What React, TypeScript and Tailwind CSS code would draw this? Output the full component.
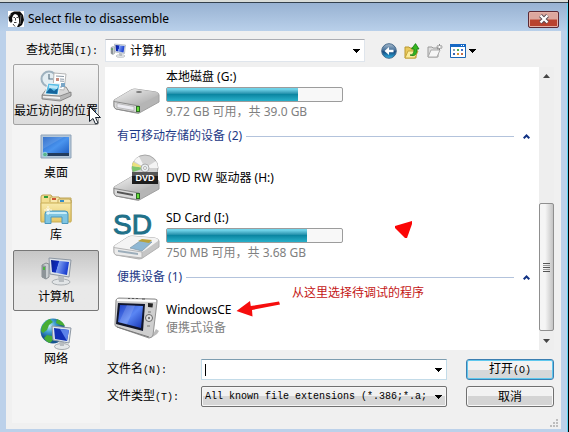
import React, { useState } from "react";

type Drive = {
  name: string;
  detail?: string;
  used?: number;
  icon: React.ReactNode;
};

type Place = {
  key: string;
  label: string;
  icon: React.ReactNode;
};

const PLACES: Place[] = [
  { key: "recent", label: "最近访问的位置", icon: <RecentIcon /> },
  { key: "desktop", label: "桌面", icon: <DesktopIcon /> },
  { key: "library", label: "库", icon: <LibraryIcon /> },
  { key: "computer", label: "计算机", icon: <ComputerIcon className="h-8 w-8" /> },
  { key: "network", label: "网络", icon: <NetworkIcon /> },
];

const HARD_DISKS: Drive[] = [
  {
    name: "本地磁盘 (G:)",
    detail: "9.72 GB 可用，共 39.0 GB",
    used: 75,
    icon: <HardDiskIcon />,
  },
];

const REMOVABLE: Drive[] = [
  { name: "DVD RW 驱动器 (H:)", icon: <DvdIcon /> },
  {
    name: "SD Card (I:)",
    detail: "750 MB 可用，共 3.68 GB",
    used: 80,
    icon: <SdIcon />,
  },
];

const PORTABLE: Drive[] = [
  { name: "WindowsCE", detail: "便携式设备", icon: <PdaIcon /> },
];

export default function App() {
  const [place, setPlace] = useState("computer");
  const [fileName, setFileName] = useState("");

  return (
    <div className="relative flex min-h-screen flex-col overflow-hidden border-r border-black bg-[#bcd1ea] font-['Noto_Sans','Noto_Sans_CJK_SC',sans-serif] text-[12px] leading-4 text-black">
      <div className="h-[3px] border-b border-[#33404c] bg-[#d9dcd8]" />
      <div className="flex flex-1 flex-col border-r border-[#5cd6f5] pr-[6px] pb-[3px] pl-[6px]">
        <TitleBar />

        <main className="relative flex flex-1 flex-col bg-[#f0f0f0]">
          <div className="flex items-center pt-2 pb-0.5">
            <label htmlFor="look-in" className="w-[99px] shrink-0 pl-5">
              查找范围<Mono>(I):</Mono>
            </label>
            <div className="flex h-[23px] flex-1 items-center border border-[#dfe5ec] border-t-[#abadb3] bg-white pr-1 pl-1">
              <ComputerIcon className="h-4 w-4" />
              <select
                id="look-in"
                className="min-w-0 flex-1 appearance-none bg-transparent pl-1 outline-none"
              >
                <option>计算机</option>
              </select>
              <DownArrow />
            </div>
            <Toolbar />
          </div>

          <div className="flex flex-1">
            <nav className="mb-[6px] ml-[6px] flex w-[88px] shrink-0 flex-col items-center gap-px self-stretch bg-[#f4f4f4]">
              {PLACES.map((p) => (
                <PlaceButton
                  key={p.key}
                  place={p}
                  hot={p.key === "recent"}
                  active={p.key === place}
                  onClick={() => setPlace(p.key)}
                />
              ))}
            </nav>

            <div className="mr-[7px] ml-[5px] flex min-w-0 flex-1 flex-col pt-[3px]">
              <div className="flex bg-white">
                <div className="min-w-0 flex-1 pt-0.5 pb-[6px]">
                  <DriveList drives={HARD_DISKS} />
                  <GroupHeader title="有可移动存储的设备 (2)" />
                  <DriveList drives={REMOVABLE} />
                  <GroupHeader title="便携设备 (1)" />
                  <DriveList drives={PORTABLE} />
                </div>
                <ScrollBar />
              </div>

              <form
                onSubmit={(e) => e.preventDefault()}
                className="mt-[9px] grid grid-cols-[94px_1fr_88px] items-center gap-y-[6px] pl-0.5"
              >
                <label htmlFor="file-name">
                  文件名<Mono>(N):</Mono>
                </label>
                <div className="mr-[19px] flex h-[21px] items-center border border-[#c3dbe8] border-t-[#7d9db0] bg-white pr-1 pl-[3px]">
                  <span className="h-3 w-px bg-black" />
                  <input
                    id="file-name"
                    value={fileName}
                    onChange={(e) => setFileName(e.target.value)}
                    className="min-w-0 flex-1 bg-transparent outline-none"
                  />
                  <DownArrow />
                </div>
                <button
                  type="submit"
                  className="h-[21px] rounded-[3px] border border-[#3c7fb1] bg-linear-to-b from-[#f2f2f2] from-50% to-[#d6d8da] to-50% leading-[17px] shadow-[inset_0_0_0_1px_#5fc8ee]"
                >
                  打开<Mono>(O)</Mono>
                </button>

                <label htmlFor="file-type">
                  文件类型<Mono>(T):</Mono>
                </label>
                <div className="mr-[19px] flex h-[21px] items-center rounded-[2px] border border-[#707070] bg-linear-to-b from-[#f1f1f1] from-50% to-[#d6d6d6] to-50% pr-1 pl-[3px] shadow-[inset_0_0_0_1px_#f6f6f6]">
                  <select
                    id="file-type"
                    className="min-w-0 flex-1 appearance-none bg-transparent font-['Liberation_Mono',monospace] text-[10px] outline-none"
                  >
                    <option>All known file extensions (*.386;*.a;</option>
                  </select>
                  <DownArrow />
                </div>
                <button
                  type="button"
                  className="h-[21px] rounded-[3px] border border-[#707070] bg-linear-to-b from-[#f2f2f2] from-50% to-[#d4d4d4] to-50% leading-[17px] shadow-[inset_0_0_0_1px_#f8f8f8]"
                >
                  取消
                </button>
              </form>
            </div>
          </div>
          <ResizeGrip />
        </main>
      </div>

      {/* Notes drawn over the dialog */}
      <svg
        className="pointer-events-none absolute top-[298px] left-[236px] h-6 w-12"
        viewBox="0 0 48 24"
        fill="#f60d0d"
      >
        <path d="M.5 13 14 3l.8 5L43 3.500l1 3L16 12l.5 6.500Z" />
      </svg>
      <svg
        className="pointer-events-none absolute top-[220px] left-[394px] h-5 w-5"
        viewBox="0 0 20 20"
        fill="#fb0505"
      >
        <path d="M1 6 18 1v3l-5 14h-2L1 8Z" />
      </svg>
      <span className="pointer-events-none absolute top-[285px] left-[292px] whitespace-nowrap text-[#c41616]">
        从这里选择待调试的程序
      </span>
      <svg
        className="pointer-events-none absolute top-[106px] left-[89px] h-[19px] w-3"
        viewBox="0 0 12 19"
      >
        <path
          d="M.5.500v15l3.500-3 2.500 5.500 2.500-1-2.500-5.500h5Z"
          fill="#fff"
          stroke="#16202c"
        />
      </svg>
    </div>
  );
}

function Mono({ children }: { children: React.ReactNode }) {
  return (
    <span className="font-['Liberation_Mono',monospace] text-[10px]">
      {children}
    </span>
  );
}

function TitleBar() {
  return (
    <header className="-mx-[6px] flex h-7 items-center bg-linear-to-b from-[#98b2d2] to-[#b9d0ea] pt-1 pr-2 pl-2">
      <svg className="h-4 w-4" viewBox="0 0 16 16">
        <path fill="#fff" d="M0 0h16v16H0z" />
        <path
          fill="#0c0c0c"
          d="M3 2 6 .5h6L15 4l1 5-2 5-3 2H9l2-4V8L9.500 4 7 3 5.500 4 4 7l.5 3L3 12 1 10l-.5-4Z"
        />
        <path
          d="M5.500 6.500H7M8.500 6.500h1.500M7.500 7v2.500M6 11.500h2.500M5 13l2 2.500"
          stroke="#444"
          fill="none"
        />
        <path
          d="m1 6 2-3M1.500 10l1.500 2M13 4l-1 9"
          stroke="#999"
          strokeWidth=".7"
        />
      </svg>
      <h1 className="flex-1 pl-1 text-[12px] leading-4">
        Select file to disassemble
      </h1>
      <button
        aria-label="Close"
        className="flex h-[17px] w-[31px] items-center justify-center rounded-[2px] border border-[#5c2a35] bg-linear-to-b from-[#dca79e] from-45% to-[#b9432f] to-55% shadow-[inset_0_0_0_1px_#e3b0a6]"
      >
        <svg className="h-[10px] w-3" viewBox="0 0 12 10">
          <path d="m2.500 1.500 7 7m0-7-7 7" stroke="#5a4a52" strokeWidth="4" />
          <path d="m2.500 1.500 7 7m0-7-7 7" stroke="#fff" strokeWidth="2.300" />
        </svg>
      </button>
    </header>
  );
}

function Toolbar() {
  return (
    <div className="flex w-[196px] shrink-0 items-center gap-[7px] pl-4">
      <button aria-label="Back">
        <svg className="h-4 w-4" viewBox="0 0 16 16">
          <defs>
            <linearGradient id="back" x2="0" y2="1">
              <stop stopColor="#a9bccd" />
              <stop offset=".45" stopColor="#44709a" />
              <stop offset=".55" stopColor="#164a80" />
              <stop offset="1" stopColor="#2fb5e6" />
            </linearGradient>
          </defs>
          <circle cx="8" cy="8" r="7.300" fill="url(#back)" stroke="#466a8c" />
          <path d="M3.500 8 8 4v2.700h4.500v2.600H8V12Z" fill="#fff" />
        </svg>
      </button>
      <button aria-label="Up one level">
        <svg className="h-4 w-4" viewBox="0 0 16 16">
          <path d="M1 4h4l1 1h6v10H1Z" fill="#e9c95c" stroke="#b99830" />
          <path d="m1 15 3-7h10l-3 7Z" fill="#fbec9c" stroke="#c7a63c" />
          <path
            d="M6 12c3 0 4-2 4-6H7.500L11.500.600 15 6h-2c0 5-2 8-7 6Z"
            fill="#35b51f"
            stroke="#137a12"
            strokeWidth=".8"
          />
        </svg>
      </button>
      <button aria-label="New folder">
        <svg className="h-4 w-4" viewBox="0 0 16 16">
          <path d="M1 4h4l1 1h5v9H1Z" fill="#dedede" stroke="#9a9a9a" />
          <path d="m1 14 3-7h9l-3 7Z" fill="#f6f6f6" stroke="#aaa" />
          <path
            d="M12.500 1v6M9.500 4h6M10.500 2l4 4m0-4-4 4"
            stroke="#777"
            strokeWidth=".9"
          />
          <circle cx="12.500" cy="4" r="1.200" fill="#fff" />
        </svg>
      </button>
      <button aria-label="View menu" className="flex items-center gap-[3px]">
        <svg className="h-4 w-4" viewBox="0 0 16 16">
          <path d="M.5 1.500h15v13H.5Z" fill="#fff" stroke="#1a66b5" />
          <path d="M0 1h16v3H0Z" fill="#1668c4" />
          <path d="M11 2h1v1h-1zM13 2h1v1h-1z" fill="#fff" />
          <path d="M3 6h2v2H3z" fill="#8aa1b4" />
          <path d="M7 6h2v2H7z" fill="#4caf50" />
          <path d="M11 6h2v2h-2z" fill="#3f72c7" />
          <path d="M3 10h2v2H3z" fill="#3a66b0" />
          <path d="M7 10h2v2H7z" fill="#d9902f" />
          <path d="M11 10h2v2h-2z" fill="#c26d4b" />
        </svg>
        <DownArrow />
      </button>
    </div>
  );
}

function DownArrow() {
  return (
    <svg
      className="pointer-events-none h-1 w-[7px] shrink-0"
      viewBox="0 0 7 4"
      shapeRendering="crispEdges"
    >
      <path d="M0 0h7L3.500 4Z" />
    </svg>
  );
}

function PlaceButton({
  place,
  hot,
  active,
  onClick,
}: {
  place: Place;
  hot: boolean;
  active: boolean;
  onClick: () => void;
}) {
  return (
    <button
      onClick={onClick}
      className={`flex h-[61px] w-[86px] flex-col items-center gap-px rounded-[2px] border pt-[5px] whitespace-nowrap
        ${
          active
            ? "border-[#777] bg-linear-to-b from-[#c6c6c6] to-[#e9e9e9] to-60%"
            : hot
              ? "border-[#a3a3a3] bg-linear-to-b from-[#f4f4f4] to-[#dcdcdc]"
              : "border-transparent"
        }
      `}
    >
      {place.icon}
      <span>{place.label}</span>
    </button>
  );
}

function GroupHeader({ title }: { title: string }) {
  return (
    <div className="my-1 flex h-6 items-center pl-3 text-[#1e3a87]">
      <h2 className="pr-1">{title}</h2>
      <div className="h-px flex-1 bg-[#b3c3dc]" />
      <button aria-label="Collapse" className="mx-[9px]">
        <svg className="h-[5px] w-[7px]" viewBox="0 0 7 5">
          <path
            d="M.7 4.300 3.500 1.500l2.800 2.800"
            fill="none"
            stroke="#123384"
            strokeWidth="2"
          />
        </svg>
      </button>
    </div>
  );
}

function DriveList({ drives }: { drives: Drive[] }) {
  return (
    <ul className="flex flex-col gap-[7px] pl-2">
      {drives.map((d) => (
        <li key={d.name} className="flex h-[51px] items-center gap-[5px]">
          {d.icon}
          <div className="flex flex-col gap-[2px]">
            <span>{d.name}</span>
            {typeof d.used === "number" && (
              <div className="h-[15px] w-[177px] rounded-[2px] border border-[#9c9c9c] bg-[#f8f8f8]">
                <div
                  className="h-full bg-linear-to-b from-[#6fd2e8] from-10% via-[#0b86a2] via-50% to-[#27b0ca]"
                  style={{ width: `${d.used}%` }}
                />
              </div>
            )}
            {d.detail && <span className="text-[#808080]">{d.detail}</span>}
          </div>
        </li>
      ))}
    </ul>
  );
}

function ScrollBar() {
  return (
    <div className="flex w-[15px] shrink-0 flex-col bg-[#eeeeee]">
      <button
        aria-label="Scroll up"
        className="flex h-[17px] items-center justify-center"
      >
        <svg className="h-1 w-[7px]" viewBox="0 0 7 4">
          <path d="M0 4h7L3.500 0Z" fill="#444" />
        </svg>
      </button>
      <div className="flex flex-1 flex-col justify-end">
        <div className="flex h-[128px] flex-col items-center justify-center gap-px rounded-[2px] border border-[#8f8f8f] bg-linear-to-r from-[#f5f5f5] from-40% to-[#c4c4c4]">
          <span className="h-px w-[7px] bg-[#555]" />
          <span className="h-px w-[7px] bg-[#999]" />
          <span className="h-px w-[7px] bg-[#555]" />
          <span className="h-px w-[7px] bg-[#999]" />
          <span className="h-px w-[7px] bg-[#555]" />
        </div>
      </div>
      <button
        aria-label="Scroll down"
        className="flex h-[19px] items-center justify-center"
      >
        <svg className="h-1 w-[7px]" viewBox="0 0 7 4">
          <path d="M0 0h7L3.500 4Z" fill="#444" />
        </svg>
      </button>
    </div>
  );
}

function ResizeGrip() {
  return (
    <svg
      className="absolute right-[3px] bottom-[2px] h-2 w-2"
      viewBox="0 0 8 8"
      fill="#bdbdbd"
    >
      <path d="M6 0h2v2H6zM3 3h2v2H3zM6 3h2v2H6zM0 6h2v2H0zM3 6h2v2H3zM6 6h2v2H6z" />
    </svg>
  );
}

function RecentIcon() {
  return (
    <svg className="h-8 w-8" viewBox="0 0 32 32">
      <path d="m2 25 6-8h18l5 8-10 5Z" fill="#d8d8d8" stroke="#8d8d8d" />
      <circle cx="9" cy="9" r="7.500" fill="#e3edf2" stroke="#9fb2bf" strokeWidth="2" />
      <path d="M9 4v5h4" fill="none" stroke="#5c7585" strokeWidth="1.200" />
      <path d="m14 3 12 1-2 16-11-1Z" fill="#fff" stroke="#b5b5b5" />
      <path d="m16 6 8 .5M20 9l4 .3M20 11l4 .3M16 17h6" stroke="#8b98a5" />
      <path d="M16 8h3v3h-3z" fill="#c78a7c" />
      <path d="M21 13h4v4h-4z" fill="#79a6c7" />
      <path d="m8 13 12 1-2 11-13-1Z" fill="#59bde6" stroke="#f5f5f5" />
      <path d="m6 23 4-5 4 3 4-3-1 6Z" fill="#16649b" />
      <path d="m9 15 9 1-1 3-8-1Z" fill="#bfe8f7" />
      <path d="m2 25 18 1 11-4v4l-11 5-18-2Z" fill="#b8b8b8" stroke="#7a7a7a" strokeWidth=".8" />
      <path d="m3 26 17 1v2L3 27.500Z" fill="#f3f3f3" />
    </svg>
  );
}

function DesktopIcon() {
  return (
    <svg className="h-8 w-8" viewBox="0 0 32 32">
      <defs>
        <linearGradient id="desk" x2="1" y2="1">
          <stop stopColor="#1d5fc4" />
          <stop offset=".5" stopColor="#4a94ee" />
          <stop offset="1" stopColor="#1a57bd" />
        </linearGradient>
      </defs>
      <path d="M1 3h30v23H1Z" fill="#b4c7d9" stroke="#8fa3b8" />
      <path d="M3 5h26v19H3Z" fill="url(#desk)" />
      <path d="M3 5h21L3 17Z" fill="#fff" opacity=".13" />
      <path d="M3 21h26v3H3Z" fill="#223c5e" />
      <circle cx="5" cy="22.500" r="2.300" fill="#58b58d" stroke="#a8dcec" strokeWidth=".8" />
    </svg>
  );
}

function LibraryIcon() {
  return (
    <svg className="h-8 w-8" viewBox="0 0 32 32">
      <defs>
        <linearGradient id="lib" x2="0" y2="1">
          <stop stopColor="#f8eaac" />
          <stop offset="1" stopColor="#e6c765" />
        </linearGradient>
      </defs>
      <path d="M1 27V3q0-2 2-2h8l2 3h18v23Z" fill="#f2dd91" stroke="#bea457" />
      <path d="M10 8V4q0-1 1-1h8l2 3h10v3" fill="#f7e8ad" stroke="#bea457" />
      <path d="M18 9V6q0-1 1-1h10q2 0 2 2v2" fill="#f7e8ad" stroke="#bea457" />
      <path d="M4 2h4v2H4z" fill="#2f9d36" />
      <path d="M12 4h4v2h-4z" fill="#cf5535" />
      <path d="M20 6h4v2h-4z" fill="#358dc7" />
      <path d="M1 9h30v19H1Z" fill="url(#lib)" stroke="#c9ad55" />
      <path d="M5 29.500V20q0-3 3-3h17q3 0 3 3v9.500h-6V23H11v6.500Z" fill="#7fc5e2" stroke="#4b97bd" />
      <path d="M6 20q0-2 2-2h17q2 0 2 2Z" fill="#c8edf8" />
      <path d="M8 12v9M4 16h8" stroke="#fff" strokeWidth=".8" />
      <path d="m6 14 4 4m0-4-4 4" stroke="#fff" strokeWidth=".5" />
    </svg>
  );
}

function ComputerIcon({ className }: { className: string }) {
  return (
    <svg className={className} viewBox="0 0 32 32">
      <defs>
        <linearGradient id="screen" x2="1" y2=".25">
          <stop stopColor="#0a1f8f" />
          <stop offset=".42" stopColor="#0f2cc0" />
          <stop offset=".46" stopColor="#7d9df0" />
          <stop offset="1" stopColor="#1b3fd0" />
        </linearGradient>
      </defs>
      <path d="m2 9 4-2 3 1v13l-3 2-4-2Z" fill="#c9ced1" stroke="#888e92" />
      <path d="m2 9 4 1v13l-4-2Z" fill="#8d9498" />
      <path d="M3 11h2v3H3z" fill="#49b83e" />
      <ellipse cx="21" cy="26" rx="9" ry="3" fill="#e2e5e7" stroke="#a8adb1" />
      <path d="m18 20 6 1v5h-5Z" fill="#b7bcc0" />
      <path d="m9 2 22 2-2 17-19-3Z" fill="#dde3e9" stroke="#8d97a3" />
      <path d="m11 4 18 2-2 13-15-3Z" fill="url(#screen)" />
    </svg>
  );
}

function NetworkIcon() {
  return (
    <svg className="h-8 w-8" viewBox="0 0 32 32">
      <defs>
        <radialGradient id="globe" cx=".35" cy=".3">
          <stop stopColor="#c8ecf8" />
          <stop offset=".5" stopColor="#3e9ed0" />
          <stop offset="1" stopColor="#15538f" />
        </radialGradient>
      </defs>
      <circle cx="13" cy="13" r="12.500" fill="url(#globe)" />
      <path
        d="M2 8q4-6 8-7l3 3-4 3-2 5-4 3-2-2ZM17 1q6 2 8 7l-5-1-4-2ZM7 17l5 1 1 4-3 3q-4-1-6-5Z"
        fill="#47ad35"
      />
      <ellipse cx="22" cy="28.500" rx="7.500" ry="3" fill="#e4e7e9" stroke="#a3a8ac" />
      <path d="m19 23 5 1v4h-4Z" fill="#b7bcc0" />
      <path d="m12 8 19 2-2 15-16-3Z" fill="#dde5ee" stroke="#8d97a3" />
      <path d="m14 10 15 2-2 11-12-2Z" fill="#1230b5" />
      <path d="m20 11 9 1-2 11Z" fill="#5b82ea" />
    </svg>
  );
}

function DiskBody() {
  return (
    <>
      <defs>
        <linearGradient id="body" x2="1" y2="1">
          <stop stopColor="#f3f3f3" />
          <stop offset="1" stopColor="#a5a5a5" />
        </linearGradient>
      </defs>
      <path d="m1 33 17-10q2-1 4-1l21 3q3 1 3 3v7L28 45q-2 2-5 1L3 42q-2-1-2-3Z" fill="#b5b5b5" stroke="#a0a0a0" />
      <path d="m1 33 17-10q2-1 4-1l21 3q3 1 2 3L28 37q-2 1-5 1L3 35q-2-1-2-2Z" fill="url(#body)" />
      <path d="M1 34q1 1 3 1l22 4v7L3 42q-2-1-2-3Z" fill="#dadada" stroke="#8a8a8a" />
      <path d="M23 39h4v6h-4z" fill="#2d6b24" />
      <path d="M24 40h2v4h-2z" fill="#68dd3c" />
    </>
  );
}

function HardDiskIcon() {
  return (
    <svg className="h-12 w-12 shrink-0" viewBox="0 0 48 48">
      <g transform="translate(0 -4)">
        <DiskBody />
        <path d="m4 36.500 17 3v4L4 40.500Z" fill="#ececf2" stroke="#aaa" strokeWidth=".7" />
        <ellipse cx="26" cy="25" rx="3" ry="1" fill="#777" />
      </g>
    </svg>
  );
}

function DvdIcon() {
  return (
    <svg className="h-12 w-12 shrink-0" viewBox="0 0 48 48">
      <DiskBody />
      <path d="m4 37 16 3v2L4 39Z" fill="#555" />
      <circle cx="32" cy="14" r="13" fill="#d2d2d2" stroke="#a6a6a6" />
      <path d="M32 14 21 7a13 13 0 0 1 5-4.500Z" fill="#f5f5f5" />
      <path d="M32 14 19 12a13 13 0 0 0 1 6Z" fill="#7cc66d" />
      <path d="M32 14 20 8l-1 4Z" fill="#ece27e" />
      <path d="m32 14 13 0a13 13 0 0 0-2-7Z" fill="#f4f4f4" />
      <circle cx="32" cy="14" r="4" fill="#e8eef0" stroke="#adadad" />
      <circle cx="32" cy="14" r="1.500" fill="#fff" stroke="#888" strokeWidth=".6" />
      <path d="M19 18h26v12H19Z" fill="#1d1d1d" />
      <path d="M19 18h26v4H19Z" fill="#555" />
      <text
        x="32"
        y="27"
        textAnchor="middle"
        fill="#fff"
        className="font-['Liberation_Sans',sans-serif] text-[9px] font-bold"
      >
        DVD
      </text>
    </svg>
  );
}

function SdIcon() {
  return (
    <svg className="h-12 w-12 shrink-0 overflow-visible" viewBox="0 0 48 48">
      <path d="m1 34 14-9q2-1 4-1l23 2q4 1 4 3v6L31 45q-2 2-5 2L3 43q-2-1-2-3Z" fill="#c6c6c6" stroke="#b0b0b0" />
      <path d="m1 34 14-9q2-1 4-1l23 2q4 1 3 3L31 39q-2 1-5 1L3 36q-2-1-2-2Z" fill="#f4f4f4" />
      <path d="M1 35q1 1 3 1l25 4v6L3 43q-2-1-2-3Z" fill="#ebebeb" stroke="#b5b5b5" />
      <path d="m17 36 10-7 12 1-10 9Z" fill="#8fb8d4" stroke="#7d97a8" strokeWidth=".7" />
      <path d="m25 29 4-2 10 1-3 3Z" fill="#b9a23c" />
      <path d="m5 38 20 3v2L5 40Z" fill="#9cadba" />
      <text
        x="0"
        y="22"
        fill="#1f7189"
        stroke="#1f7189"
        className="font-['Liberation_Sans',sans-serif] text-[28px]"
      >
        SD
      </text>
    </svg>
  );
}

function PdaIcon() {
  return (
    <svg className="h-12 w-12 shrink-0" viewBox="0 0 48 48">
      <defs>
        <linearGradient id="pda" x2="1" y2="1">
          <stop stopColor="#1d3fc4" />
          <stop offset=".5" stopColor="#5a86f4" />
          <stop offset="1" stopColor="#1433b4" />
        </linearGradient>
      </defs>
      <path d="m38 43 6-4 2-3-3-2Z" fill="#bbb" />
      <path d="M3 5q1-2 3-2l36 1q3 0 2 3l-4 33q-1 3-4 3L4 32q-3-1-2-4Z" fill="#cfcfcf" stroke="#949494" />
      <path d="m4 5 39 1" stroke="#fff" strokeWidth="2" />
      <path d="m15 3.500 2 0m2 0 2 0m2 0 2 0m4 .5 3 0" stroke="#555" />
      <path d="m5 8 27 1-2 27L3 29Z" fill="#10152b" />
      <path d="m7 10 23 1-2 22L5 27Z" fill="url(#pda)" />
      <path d="m14 10 8 .5-8 19-8-2Z" fill="#fff" opacity=".15" />
      <path d="m35 8 5 .5-.5 4-4.500-.5Z" fill="#242424" />
      <circle cx="36" cy="23" r="3.500" fill="#e6e6e6" stroke="#666" />
      <circle cx="36" cy="23" r="1.200" fill="#777" />
      <path d="M35 17h3M34 31h3" stroke="#777" strokeWidth="1.200" />
      <path d="m4 32 32 10" stroke="#777" />
    </svg>
  );
}
